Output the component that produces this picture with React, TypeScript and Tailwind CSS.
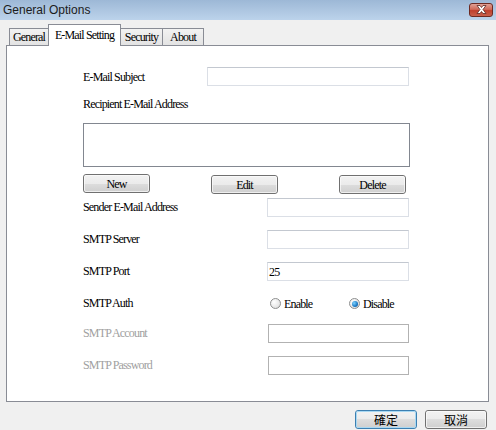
import React from "react";

const serif = "font-['Liberation_Serif','Times_New_Roman',serif] text-[12px] tracking-[-0.07em]";

function WinButton({ label, primary = false, w = "w-[67px]", cjk = false }: { label: string; primary?: boolean; w?: string; cjk?: boolean }) {
    return (
        <div
            className={`${w} h-[19px] rounded-[3px] border ${
                primary ? "border-[#3c7fb1]" : "border-[#707070]"
            } bg-[linear-gradient(to_bottom,#f2f2f2_0%,#ebebeb_50%,#dddddd_50%,#cfcfcf_100%)] flex items-center justify-center leading-none text-black ${
                cjk ? "font-['Noto_Sans_CJK_TC',sans-serif] text-[12px]" : serif
            }`}
        >
            <div className={`w-full h-full rounded-[2px] border ${primary ? "border-[#a8d8f2]" : "border-[#fcfcfc]/70"} flex items-center justify-center`}>
                {label}
            </div>
        </div>
    );
}

function TextBox({ value = "", disabled = false, w = "w-[142px]" }: { value?: string; disabled?: boolean; w?: string }) {
    return (
        <div
            className={`${w} h-[19px] bg-white border ${
                disabled ? "border-[#b2b2b2]" : "border-[#dbdfe6] border-t-[#c3c8d0]"
            } flex items-center pl-[1px] ${serif} text-black`}
        >
            {value}
        </div>
    );
}

function Radio({ checked, label }: { checked: boolean; label: string }) {
    return (
        <div className="flex items-center gap-[3px]">
            <div className="w-[11px] h-[11px] rounded-full border border-[#8e8f8f] bg-[radial-gradient(circle_at_35%_35%,#ffffff_0%,#e8e8e8_60%,#cfcfcf_100%)] flex items-center justify-center">
                {checked && (
                    <div className="w-[6px] h-[6px] rounded-full bg-[radial-gradient(circle_at_35%_35%,#7ed3ff_0%,#1b79c4_60%,#0d4e8a_100%)]" />
                )}
            </div>
            <span className={`${serif} text-black`}>{label}</span>
        </div>
    );
}

function Row({ label, children, gray = false, mt }: { label: string; children: React.ReactNode; gray?: boolean; mt: string }) {
    return (
        <div className={`flex items-center h-[19px] ${mt}`}>
            <div className={`w-[184px] -mt-[2px] ${serif} ${gray ? "text-[#a0a0a0]" : "text-black"}`}>{label}</div>
            {children}
        </div>
    );
}

function Tab({ label, w, selected = false }: { label: string; w: string; selected?: boolean }) {
    return (
        <div
            className={`${w} -ml-px border border-b-0 border-[#898c95] flex items-center justify-center ${serif} text-black ${
                selected
                    ? "h-[22px] -mb-px bg-white relative z-10 pb-[2px]"
                    : "h-[17px] bg-[linear-gradient(to_bottom,#f2f2f2,#e3e3e3)]"
            }`}
        >
            {label}
        </div>
    );
}

export default function App() {
    return (
        <div className="w-[496px] h-[430px] flex flex-col bg-[#f0f0f0] overflow-hidden">
            <div className="h-[20px] shrink-0 flex items-center justify-between pl-[3px] pr-[3px] bg-[linear-gradient(to_bottom,#9db8d6,#bcd3eb)]">
                <span className="font-['Liberation_Sans',Arial,sans-serif] text-[12px] text-[#1b1b1b] leading-none">General Options</span>
                <div className="w-[24px] h-[14px] mt-[-1px] rounded-[3px] border border-[#6d2a22] bg-[linear-gradient(to_bottom,#e0a196_0%,#d06a58_45%,#bf3f2d_55%,#c8604c_100%)] flex items-center justify-center">
                    <svg width="11" height="9" viewBox="0 0 11 9">
                        <path d="M1 0.5 L4 0.5 L5.5 2.5 L7 0.5 L10 0.5 L7 4.5 L10 8.5 L7 8.5 L5.5 6.5 L4 8.5 L1 8.5 L4 4.5 Z" fill="#ffffff" stroke="#5a2a25" strokeWidth="0.8" />
                    </svg>
                </div>
            </div>

            <div className="flex items-end h-[21px] mt-[4px] pl-[10px] shrink-0">
                <Tab label="General" w="w-[40px]" />
                <Tab label="E-Mail Setting" w="w-[73px]" selected />
                <Tab label="Security" w="w-[43px]" />
                <Tab label="About" w="w-[42px]" />
            </div>

            <div className="ml-[6px] w-[483px] h-[357px] shrink-0 bg-white border border-[#898c95] pl-[76px] pt-[21px]">
                <div className="flex items-center h-[19px]">
                    <div className={`w-[124px] ${serif} text-black`}>E-Mail Subject</div>
                    <TextBox w="w-[202px]" />
                </div>
                <div className={`mt-[11px] h-[14px] flex items-center ${serif} text-black`}>Recipient E-Mail Address</div>
                <div className="mt-[12px] w-[327px] h-[44px] border border-[#828790] bg-white" />
                <div className="mt-[7px] w-[323px] flex justify-between items-end h-[19px]">
                    <WinButton label="New" />
                    <div className="translate-y-[1px]"><WinButton label="Edit" /></div>
                    <div className="translate-y-[1px]"><WinButton label="Delete" /></div>
                </div>
                <Row label="Sender E-Mail Address" mt="mt-[5px]">
                    <TextBox />
                </Row>
                <Row label="SMTP Server" mt="mt-[13px]">
                    <TextBox />
                </Row>
                <Row label="SMTP Port" mt="mt-[13px]">
                    <TextBox value="25" />
                </Row>
                <Row label="SMTP Auth" mt="mt-[13px]">
                    <div className="flex items-center pl-[3px]">
                        <div className="w-[79px]">
                            <Radio checked={false} label="Enable" />
                        </div>
                        <Radio checked label="Disable" />
                    </div>
                </Row>
                <Row label="SMTP Account" gray mt="mt-[11px]">
                    <div className="ml-[1px]"><TextBox disabled w="w-[141px]" /></div>
                </Row>
                <Row label="SMTP Password" gray mt="mt-[13px]">
                    <div className="ml-[1px]"><TextBox disabled w="w-[141px]" /></div>
                </Row>
            </div>

            <div className="mt-[8px] flex justify-end gap-[8px] pr-[9px]">
                <WinButton label="確定" primary w="w-[62px]" cjk />
                <WinButton label="取消" w="w-[62px]" cjk />
            </div>
        </div>
    );
}
